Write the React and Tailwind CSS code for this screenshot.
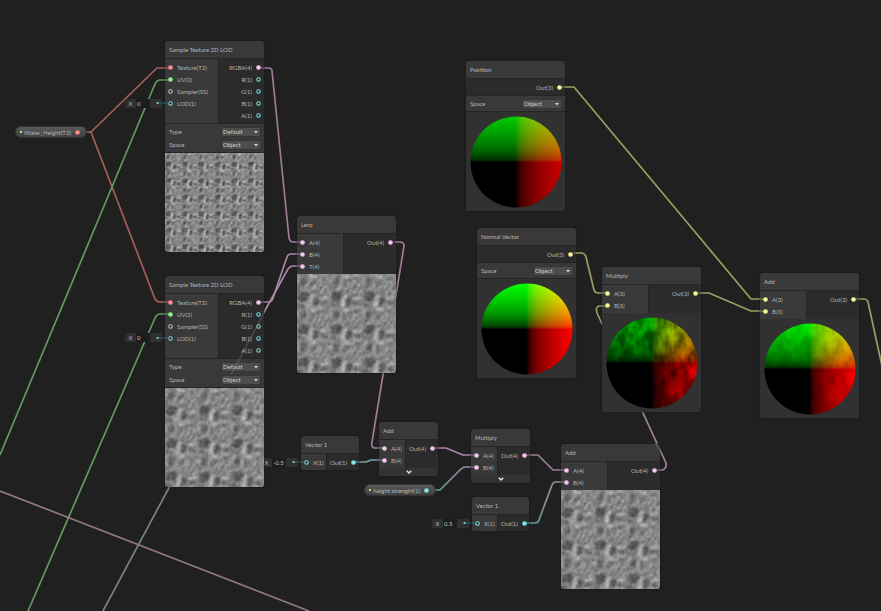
import React from "react";

const PINK = "#f7c4f0";
const RED = "#fb8b86";
const GREEN = "#94ee8c";
const CYAN = "#84e4e7";
const YELLOW = "#f6f894";
const GRAY = "#c8c8c8";

const wires = [
  { d: "M171 68H157L91 132H80", c: "#a55f5d" },
  { d: "M91 132L155 299Q157 302 160 302H171", c: "#a55f5d" },
  { d: "M171 80H160Q157 80 155 84L0 455", c: "#649862" },
  { d: "M171 314H160Q157 314 155 318L28 611", c: "#649862" },
  { d: "M258 68H268Q272 68 272 71L289 238Q290 242 293 242H303", c: "#9c7c98" },
  { d: "M258 302H268Q272 302 273 298L287 257Q288 254 291 254H303", c: "#a886a4" },
  { d: "M303 266H293Q290 266 288 269L263 314", c: "#a886a4" },
  { d: "M171 484L103 611", c: "#76808c" },
  { d: "M0 491L309 611", c: "#93797c" },
  { d: "M391 242H400Q404 242 404 246L372 442Q371 448 375 448H385", c: "#9c7c98" },
  { d: "M433 448H446L463 455H477", c: "#a886a4" },
  { d: "M353 462H366L371 460H385", c: "#7c9daa" },
  { d: "M427 490H440L461 469Q463 467 466 467H477", c: "url(#cyanPinkA)" },
  { d: "M524 455H538L553 470H567", c: "#9c7c98" },
  { d: "M523 523H535Q538 523 539 520L552 485Q553 482 556 482H567", c: "url(#cyanPinkB)" },
  { d: "M655 470H662Q667 469 666 463L597 313Q595 306 600 306H608", c: "url(#pinkYellow)" },
  { d: "M560 87H574L751 299H766", c: "#9b9d62" },
  { d: "M571 253H581Q585 253 586 257L594 290Q595 293 598 293H608", c: "#9b9d62" },
  { d: "M696 293H709L751 311H766", c: "#9b9d62" },
  { d: "M853 299H864Q867 299 868 302L882 366", c: "#9b9d62" },
];

function Wires() {
  return (
    <svg className="pointer-events-none absolute left-0 top-0 h-full w-full overflow-visible" aria-hidden="true">
      <defs>
        <linearGradient id="cyanPinkA" gradientUnits="userSpaceOnUse" x1="430" y1="490" x2="472" y2="467">
          <stop offset="0" stopColor="#5d9a9c" />
          <stop offset="1" stopColor="#a589a3" />
        </linearGradient>
        <linearGradient id="cyanPinkB" gradientUnits="userSpaceOnUse" x1="530" y1="523" x2="560" y2="482">
          <stop offset="0" stopColor="#5d9a9c" />
          <stop offset="1" stopColor="#a589a3" />
        </linearGradient>
        <linearGradient id="pinkYellow" gradientUnits="userSpaceOnUse" x1="660" y1="470" x2="600" y2="306">
          <stop offset="0" stopColor="#a381a0" />
          <stop offset="1" stopColor="#9b9d62" />
        </linearGradient>
      </defs>
      <g fill="none" strokeWidth="1.7" strokeLinejoin="round">
        {wires.map((w) => (
          <path key={w.d} d={w.d} stroke={w.c} />
        ))}
      </g>
    </svg>
  );
}

function Overlay() {
  return (
    <svg className="pointer-events-none absolute left-0 top-0 h-full w-full overflow-visible" aria-hidden="true">
      <g fill="none" strokeWidth="1.5">
        <path d="M265 311L231 375" stroke="#8d8d95" opacity="0.3" />
        <path d="M660 450L655 443" stroke="#a381a0" opacity="0.4" />
        <g stroke={PINK} opacity="0.3">
          <path d="M261 68H264M261 302H264M297 242H301M297 254H301M297 266H301M394 242H397M379 448H383M379 460H383M435 448H438M471 455H475M471 467H475M526 455H530M561 470H565M561 482H565M657 470H660" />
        </g>
        <g stroke={YELLOW} opacity="0.3">
          <path d="M562 87H566M573 253H577M602 293H606M602 306H606M698 293H701M760 299H764M760 311H764M855 299H859" />
        </g>
        <path d="M165 68H169M165 302H169" stroke={RED} opacity="0.4" />
        <path d="M165 80H169M165 314H169" stroke={GREEN} opacity="0.4" />
        <path d="M355 462H359M525 523H529" stroke={CYAN} opacity="0.4" />
      </g>
      <g stroke="#3d6c72" strokeWidth="1.2" strokeDasharray="3 1">
        <path d="M158 103H169M158 338H169M294 462H304M464 523H475" />
      </g>
      <g fill={CYAN}>
        <circle cx="157.500" cy="103" r="1" />
        <circle cx="157.500" cy="338" r="1" />
        <circle cx="293.500" cy="462" r="1" />
        <circle cx="464.500" cy="523" r="1" />
      </g>
    </svg>
  );
}

function RockTile() {
  return (
    <g fill="none" strokeLinecap="round">
      <rect width="33" height="33" fill="#858585" />
      <g fill="#565656">
        <path d="M2 19L9 17L13 20L10 26L4 28L1 25Z" />
        <path d="M17 23L22 24L21 30L17 33L15 29Z" />
        <path d="M3 5L8 3L10 8L7 12L3 11Z" opacity="0.8" />
        <path d="M22 28L28 27L32 30L26 31Z" opacity="0.7" />
        <path d="M0 29L5 30L8 33H0Z" opacity="0.6" />
      </g>
      <g stroke="#666666" strokeWidth="1.8">
        <path d="M14 7L14 12M19 6L16 11M22 10L16 19M27 10L22 18M30 14L25 21M28 3L25 6M1 14L5 14" />
      </g>
      <g fill="#b0b0b0">
        <path d="M13 22L17 20L16 26L15 33H10L12 28Z" />
        <path d="M12 1L18 1L21 3L17 5L13 3Z" />
        <path d="M23 23L30 22L32 24L25 26Z" />
      </g>
      <g stroke="#a2a2a2" strokeWidth="1.7">
        <path d="M2 2L1 9M20 9L15 17M25 7L20 16M29 10L24 19M4 16L9 15M11 7L10 13M23 2L28 1M23 32L29 33M31 16L29 20" />
      </g>
    </g>
  );
}

function RockPreview({ id, size }) {
  const k = size / 33;
  return (
    <svg viewBox="0 0 99 99" className="block w-full" role="img" aria-label="Height texture preview">
      <defs>
        <pattern id={id} width={size} height={size} patternUnits="userSpaceOnUse">
          <g transform={`scale(${k})`}>
            <RockTile />
          </g>
        </pattern>
        <filter id={`${id}-soft`} x="0" y="0" width="1" height="1" colorInterpolationFilters="sRGB">
          <feGaussianBlur in="SourceGraphic" stdDeviation={size > 20 ? 1 : 0.5} result="b" />
          <feTurbulence type="fractalNoise" baseFrequency="0.25" numOctaves="2" seed="4" />
          <feColorMatrix type="matrix" values="1 0 0 0 0  1 0 0 0 0  1 0 0 0 0  0 0 0 0 1" result="n" />
          <feComposite in="b" in2="n" operator="arithmetic" k2="1" k3="0.25" k4="-0.12" />
        </filter>
      </defs>
      <rect x="-4" y="-4" width="107" height="107" fill={`url(#${id})`} filter={`url(#${id}-soft)`} />
    </svg>
  );
}

function Sphere({ id, level, noise }) {
  const curve = [0, 0.02, 0.06, 0.12, 0.25, 0.45, 0.7, 1];
  const stops = (rgb) =>
    curve.map((t) => {
      const v = Math.round(level * Math.pow(t, 0.5));
      return <stop key={t} offset={t} stopColor={rgb === "g" ? `rgb(0,${v},0)` : `rgb(${v},0,0)`} />;
    });
  return (
    <svg viewBox="0 0 99 99" className="block w-full bg-[#313131]" role="img" aria-label="Vector preview">
      <defs>
        <linearGradient id={`${id}-g`} gradientUnits="userSpaceOnUse" x1="0" y1="50" x2="0" y2="5">
          {stops("g")}
        </linearGradient>
        <linearGradient id={`${id}-r`} gradientUnits="userSpaceOnUse" x1="50" y1="0" x2="95" y2="0">
          {stops("r")}
        </linearGradient>
        <clipPath id={`${id}-c`}>
          <circle cx="50" cy="50" r="45.500" />
        </clipPath>
        <filter id={`${id}-n`} x="0" y="0" width="1" height="1" colorInterpolationFilters="sRGB">
          <feTurbulence type="fractalNoise" baseFrequency="0.11 0.06" numOctaves="3" seed="8" />
          <feColorMatrix type="matrix" values="2 0 0 0 -0.5  2 0 0 0 -0.5  2 0 0 0 -0.5  0 0 0 0 1" result="n" />
          <feComposite in="SourceGraphic" in2="n" operator="arithmetic" k1={noise} k2={1 - noise * 0.5} />
        </filter>
      </defs>
      <g clipPath={`url(#${id}-c)`}>
        <g filter={noise ? `url(#${id}-n)` : undefined} className="isolate">
          <rect width="99" height="99" fill="#000" />
          <rect width="99" height="50" fill={`url(#${id}-g)`} />
          <rect x="50" width="49" height="99" fill={`url(#${id}-r)`} className="mix-blend-screen" />
        </g>
      </g>
    </svg>
  );
}

function Dot({ color, open }) {
  return (
    <svg viewBox="0 0 5 5" className="block h-[5px] w-[5px] shrink-0" aria-hidden="true">
      {open ? (
        <circle cx="2.500" cy="2.500" r="1.700" fill="#151515" stroke={color} strokeWidth="1.100" />
      ) : (
        <circle cx="2.500" cy="2.500" r="2.300" fill={color} />
      )}
    </svg>
  );
}

function Port({ port, out }) {
  const [label, color, open] = port;
  return (
    <li className={`flex h-3 items-center gap-1 px-[3px] ${out ? "flex-row-reverse" : ""}`}>
      <Dot color={color} open={open} />
      <span className="pt-px">{label}</span>
    </li>
  );
}

function Choice({ id, label, value }) {
  return (
    <div className="flex h-[13px] items-center justify-between pl-1 pr-1">
      <label htmlFor={id}>{label}</label>
      <span className="relative flex">
        <select
          id={id}
          defaultValue={value}
          className="h-2 w-[38px] appearance-none rounded-[1px] bg-[#4d4d4d] pl-px text-[6px] leading-[8px] text-[#d0d0d0] shadow-[0_0_1px_#1a1a1a] outline-none"
        >
          <option>{value}</option>
        </select>
        <svg viewBox="0 0 4 3" className="pointer-events-none absolute right-[2px] top-[3px] h-[3px] w-1" aria-hidden="true">
          <path d="M0 0H4L2 2.500Z" fill="#d4d4d4" />
        </svg>
      </span>
    </div>
  );
}

function Node({ place, title, inputs = [], outputs, inputWidth, choices, children }) {
  return (
    <section className={`absolute overflow-hidden rounded-[3px] bg-[#393939] shadow-[0_0_2px_#151515] ${place}`}>
      <h2 className="flex h-[18px] items-center border-b border-[#252525] pl-1 text-[#b8b8b8]">{title}</h2>
      <div className="flex">
        {inputs.length > 0 && (
          <ul className={`shrink-0 border-r border-[#252525] bg-[#393939] py-0.5 ${inputWidth}`}>
            {inputs.map((p) => (
              <Port key={p[0]} port={p} />
            ))}
          </ul>
        )}
        <ul className="grow bg-[#2b2b2b] py-0.5">
          {outputs.map((p) => (
            <Port key={p[0]} port={p} out />
          ))}
        </ul>
      </div>
      {choices && <div className="border-y border-[#252525] py-px">{choices}</div>}
      {children}
    </section>
  );
}

function Expand() {
  return (
    <button type="button" aria-label="Expand preview" className="flex h-2 w-full items-center justify-center bg-[#333333]">
      <svg viewBox="0 0 6 4" className="h-1 w-[6px]" aria-hidden="true">
        <path d="M0.800 0.800L3 3L5.200 0.800" fill="none" stroke="#e8e8e8" strokeWidth="1.400" />
      </svg>
    </button>
  );
}

function Field({ place, id, value }) {
  return (
    <div className={`absolute flex h-[9px] w-[37px] bg-[#303030] ${place}`}>
      <label htmlFor={id} className="w-[11px] text-center leading-[10px]">
        X
      </label>
      <input
        id={id}
        defaultValue={value}
        className="w-[14px] bg-[#1d1d1d] pl-px text-[6px] leading-[9px] text-[#c4c4c4] outline-none"
      />
    </div>
  );
}

function Pill({ place, label, color }) {
  return (
    <div
      className={`absolute flex h-3 w-[72px] items-center justify-between rounded-full border border-[#343434] bg-linear-to-b from-[#5a5a5a] to-[#404040] pl-1 pr-1.5 ${place}`}
    >
      <span className="h-0.5 w-0.5 bg-[#a5f06a]" />
      <span className="flex items-center gap-1">
        <span className="pt-px">{label}</span>
        <Dot color={color} />
      </span>
    </div>
  );
}

function SampleNode({ place, id, tile }) {
  return (
    <Node
      place={place}
      title="Sample Texture 2D LOD"
      inputWidth="w-[54px]"
      inputs={[
        ["Texture(T2)", RED],
        ["UV(2)", GREEN],
        ["Sampler(SS)", GRAY, true],
        ["LOD(1)", CYAN, true],
      ]}
      outputs={[
        ["RGBA(4)", PINK],
        ["R(1)", CYAN, true],
        ["G(1)", CYAN, true],
        ["B(1)", CYAN, true],
        ["A(1)", CYAN, true],
      ]}
      choices={
        <>
          <Choice id={`${id}-type`} label="Type" value="Default" />
          <Choice id={`${id}-space`} label="Space" value="Object" />
        </>
      }
    >
      <RockPreview id={`${id}-rock`} size={tile} />
    </Node>
  );
}

export default function App() {
  return (
    <main className="relative h-screen w-full overflow-hidden bg-[#202020] font-[Lato,'Liberation_Sans',sans-serif] text-[6px] leading-[8px] text-[#b4b4b4]">
      <Wires />

      <Field place="left-[125px] top-[99px]" id="lod-a" value="0" />
      <Field place="left-[125px] top-[333px]" id="lod-b" value="0" />
      <Field place="left-[261px] top-[458px]" id="vec-a" value="-0.5" />
      <Field place="left-[432px] top-[519px]" id="vec-b" value="0.5" />

      <Pill place="left-[15px] top-[126px]" label="Water_Height(T2)" color={RED} />
      <Pill place="left-[364px] top-[484px]" label="height strenght(1)" color={CYAN} />

      <SampleNode place="left-[165px] top-[41px] w-[99px]" id="sample-a" tile={16.5} />
      <SampleNode place="left-[165px] top-[276px] w-[99px]" id="sample-b" tile={33} />

      <Node
        place="left-[297px] top-[216px] w-[99px]"
        title="Lerp"
        inputWidth="w-[47px]"
        inputs={[["A(4)", PINK], ["B(4)", PINK], ["T(4)", PINK]]}
        outputs={[["Out(4)", PINK]]}
      >
        <RockPreview id="lerp-rock" size={33} />
      </Node>

      <Node
        place="left-[466px] top-[61px] w-[99px]"
        title="Position"
        outputs={[["Out(3)", YELLOW]]}
        choices={<Choice id="position-space" label="Space" value="Object" />}
      >
        <Sphere id="position" level={200} noise={0} />
      </Node>

      <Node
        place="left-[477px] top-[228px] w-[99px]"
        title="Normal Vector"
        outputs={[["Out(3)", YELLOW]]}
        choices={<Choice id="normal-space" label="Space" value="Object" />}
      >
        <Sphere id="normal" level={255} noise={0} />
      </Node>

      <Node
        place="left-[602px] top-[267px] w-[99px]"
        title="Multiply"
        inputWidth="w-[47px]"
        inputs={[["A(3)", YELLOW], ["B(3)", YELLOW]]}
        outputs={[["Out(3)", YELLOW]]}
      >
        <Sphere id="multiply" level={165} noise={0.8} />
      </Node>

      <Node
        place="left-[760px] top-[273px] w-[99px]"
        title="Add"
        inputWidth="w-[47px]"
        inputs={[["A(3)", YELLOW], ["B(3)", YELLOW]]}
        outputs={[["Out(3)", YELLOW]]}
      >
        <Sphere id="add" level={230} noise={0.25} />
      </Node>

      <Node
        place="left-[301px] top-[436px] w-[58px]"
        title="Vector 1"
        inputWidth="w-[26px]"
        inputs={[["X(1)", CYAN, true]]}
        outputs={[["Out(1)", CYAN]]}
      />

      <Node
        place="left-[379px] top-[422px] w-[59px]"
        title="Add"
        inputWidth="w-[27px]"
        inputs={[["A(4)", PINK], ["B(4)", PINK]]}
        outputs={[["Out(4)", PINK]]}
      >
        <Expand />
      </Node>

      <Node
        place="left-[471px] top-[429px] w-[59px]"
        title="Multiply"
        inputWidth="w-[27px]"
        inputs={[["A(4)", PINK], ["B(4)", PINK]]}
        outputs={[["Out(4)", PINK]]}
      >
        <Expand />
      </Node>

      <Node
        place="left-[472px] top-[497px] w-[57px]"
        title="Vector 1"
        inputWidth="w-[26px]"
        inputs={[["X(1)", CYAN, true]]}
        outputs={[["Out(1)", CYAN]]}
      />

      <Node
        place="left-[561px] top-[444px] w-[99px]"
        title="Add"
        inputWidth="w-[47px]"
        inputs={[["A(4)", PINK], ["B(4)", PINK]]}
        outputs={[["Out(4)", PINK]]}
      >
        <RockPreview id="sum-rock" size={33} />
      </Node>

      <Overlay />
    </main>
  );
}
